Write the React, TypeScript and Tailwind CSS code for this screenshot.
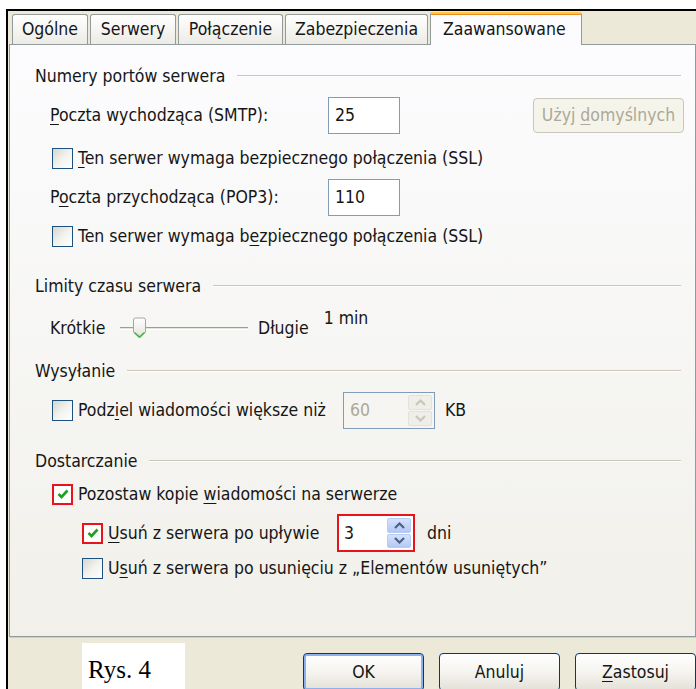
import type { ReactNode } from "react";

// Konto pocztowe — karta "Zaawansowane" (Windows XP)

const ui = "font-['DejaVu_Sans_Condensed','Liberation_Sans',sans-serif] text-[17.5px] text-[#161616]";

const tabs = ["Ogólne", "Serwery", "Połączenie", "Zabezpieczenia"];
const tabWidths = ["w-[76px]", "w-[86px]", "w-[105px]", "w-[143px]"];

function U({ children }: { children: ReactNode }) {
  return <span className="underline decoration-1 underline-offset-[3px]">{children}</span>;
}

function Check({ checked = false, marked = false }: { checked?: boolean; marked?: boolean }) {
  return (
    <span
      className={`flex h-[21px] w-[21px] shrink-0 items-center justify-center ${
        marked ? "border-2 border-[#e8141c] bg-white" : "border border-[#1c5180] bg-gradient-to-br from-[#d6d6cf] via-[#f2f2ee] to-white"
      }`}
    >
      {checked && (
        <svg width="14" height="14" viewBox="0 0 14 14">
          <path d="M2.5 7 L5.5 10 L11.5 3.5" fill="none" stroke="#21a121" strokeWidth="2.6" />
        </svg>
      )}
    </span>
  );
}

function Group({ title }: { title: string }) {
  return (
    <div className="flex h-[20px] items-center pl-[25px] pr-[14px]">
      <span>{title}</span>
      <span className="ml-[12px] h-[2px] flex-1 border-t border-[#c9c7ba] border-b border-b-white" />
    </div>
  );
}

function Arrow({ up, color }: { up: boolean; color: string }) {
  return (
    <svg width="11" height="7" viewBox="0 0 11 7">
      <path d={up ? "M1 6 L5.5 1.5 L10 6" : "M1 1 L5.5 5.5 L10 1"} fill="none" stroke={color} strokeWidth="2.2" />
    </svg>
  );
}

function Spin({ enabled }: { enabled: boolean }) {
  const cell = enabled
    ? "bg-gradient-to-b from-[#d5e2fc] to-[#b4c8f5] border border-[#b7cbf4]"
    : "bg-[#efeee8] border border-[#e2e1da]";
  const c = enabled ? "#4d6185" : "#c9c7ba";
  return (
    <div className="flex h-full w-[26px] flex-col gap-px py-[2px] pr-[2px]">
      <span className={`flex flex-1 items-center justify-center rounded-[2px] ${cell}`}>
        <Arrow up color={c} />
      </span>
      <span className={`flex flex-1 items-center justify-center rounded-[2px] ${cell}`}>
        <Arrow up={false} color={c} />
      </span>
    </div>
  );
}

function Thumb() {
  return (
    <svg width="15" height="22" viewBox="0 0 15 22" className="absolute left-[12px] top-[4px]">
      <defs>
        <linearGradient id="th" x1="0" y1="0" x2="0" y2="1">
          <stop offset="0" stopColor="#ffffff" />
          <stop offset="1" stopColor="#e3e2dc" />
        </linearGradient>
      </defs>
      <path d="M1.5 3 Q1.5 1 3.5 1 H11.5 Q13.5 1 13.5 3 V15 L7.5 21 L1.5 15 Z" fill="url(#th)" stroke="#a6a59c" />
      <path d="M2.5 15.5 L7.5 20 L12.5 15.5" fill="none" stroke="#3bb53b" strokeWidth="1.4" />
    </svg>
  );
}

function XpButton({ children, focused = false }: { children: ReactNode; focused?: boolean }) {
  return (
    <div
      className={`flex h-[38px] w-[121px] shrink-0 items-center justify-center rounded-[4px] border border-[#003c74] bg-gradient-to-b from-white via-[#f5f4ef] to-[#e3e1d7] ${
        focused ? "shadow-[inset_0_0_0_2px_#8fb0ef]" : ""
      }`}
    >
      {children}
    </div>
  );
}

export default function App() {
  return (
    <div className={`h-[689px] w-[696px] overflow-hidden bg-white pl-[6px] pt-[9px] ${ui}`}>
      <div className="h-[700px] border-l-2 border-t-2 border-black bg-[#ece9d8]">
        {/* zakładki */}
        <div className="relative z-10 flex h-[33px] items-end gap-[2px] pl-[4px]">
          {tabs.map((t, i) => (
            <div
              key={t}
              className={`flex h-[30px] items-center justify-center rounded-t-[3px] border border-b-0 border-[#919b9c] bg-gradient-to-b from-white to-[#ecebe5] ${tabWidths[i]}`}
            >
              {t}
            </div>
          ))}
          <div className="relative top-px flex h-[33px] w-[152px] flex-col rounded-t-[3px] border-x border-[#919b9c] bg-[#fcfcfe]">
            <span className="h-[3px] rounded-t-[2px] bg-[#ffc83c] border-b border-[#e68b2c]" />
            <span className="pl-[12px] pt-[1px]">Zaawansowane</span>
          </div>
        </div>

        {/* panel */}
        <div className="ml-px flex h-[593px] w-[687px] flex-col border border-[#919b9c] bg-gradient-to-b from-[#fcfcfe] to-[#f1f0ea] shadow-[1px_1px_0_#d0cfc4]">
          <div className="mt-[21px]">
            <Group title="Numery portów serwera" />
          </div>

          <div className="mt-[10px] flex h-[38px] items-center pl-[40px]">
            <span className="w-[278px]">
              <U>P</U>oczta wychodząca (SMTP):
            </span>
            <span className="flex h-[37px] w-[72px] items-center border border-[#7f9db9] bg-white pl-[6px]">25</span>
            <span className="ml-[133px] flex h-[35px] w-[151px] items-center justify-center rounded-[4px] border border-[#c9c7ba] bg-[#f5f4ea] text-[#aca899]">
              <span>
                Użyj <U>d</U>omyślnych
              </span>
            </span>
          </div>

          <div className="mt-[12px] flex h-[24px] items-center gap-[5px] pl-[42px]">
            <Check />
            <span>
              <U>T</U>en serwer wymaga bezpiecznego połączenia (SSL)
            </span>
          </div>

          <div className="mt-[8px] flex h-[38px] items-center pl-[40px]">
            <span className="w-[278px]">
              P<U>o</U>czta przychodząca (POP3):
            </span>
            <span className="flex h-[37px] w-[72px] items-center border border-[#7f9db9] bg-white pl-[6px]">110</span>
          </div>

          <div className="mt-[8px] flex h-[24px] items-center gap-[5px] pl-[42px]">
            <Check />
            <span>
              Ten serwer wymaga b<U>e</U>zpiecznego połączenia (SSL)
            </span>
          </div>

          <div className="mt-[28px]">
            <Group title="Limity czasu serwera" />
          </div>

          <div className="mt-[17px] flex h-[30px] items-center pl-[40px]">
            <span className="w-[70px]">Krótkie</span>
            <div className="relative h-[30px] w-[128px]">
              <span className="absolute left-0 right-0 top-[14px] h-[3px] border-t border-[#9d9c99] border-b border-b-white bg-[#e4e3dc]" />
              <Thumb />
            </div>
            <span className="ml-[10px]">Długie</span>
            <span className="ml-[15px] self-start -mt-[8px]">1 min</span>
          </div>

          <div className="mt-[18px]">
            <Group title="Wysyłanie" />
          </div>

          <div className="mt-[10px] flex h-[38px] items-center pl-[42px]">
            <Check />
            <span className="ml-[5px] w-[265px]">
              Podz<U>i</U>el wiadomości większe niż
            </span>
            <span className="flex h-[37px] w-[92px] items-center justify-between border border-[#7f9db9] bg-[#f6f5f1] pl-[6px] text-[#aca899]">
              60
              <Spin enabled={false} />
            </span>
            <span className="ml-[10px]">KB</span>
          </div>

          <div className="mt-[22px]">
            <Group title="Dostarczanie" />
          </div>

          <div className="mt-[11px] flex h-[24px] items-center gap-[5px] pl-[42px]">
            <Check checked marked />
            <span>
              Pozostaw kopie <U>w</U>iadomości na serwerze
            </span>
          </div>

          <div className="mt-[8px] flex h-[38px] items-center pl-[72px]">
            <Check checked marked />
            <span className="ml-[5px] w-[229px]">
              <U>U</U>suń z serwera po upływie
            </span>
            <span className="flex h-[38px] w-[78px] items-center justify-between border-2 border-[#e8141c] bg-white pl-[5px]">
              3
              <Spin enabled />
            </span>
            <span className="ml-[12px]">dni</span>
          </div>

          <div className="mt-[4px] flex h-[24px] items-center gap-[5px] pl-[72px]">
            <Check />
            <span>
              U<U>s</U>uń z serwera po usunięciu z „Elementów usuniętych”
            </span>
          </div>
        </div>

        {/* przyciski */}
        <div className="flex items-start">
          <div className="ml-[74px] mt-[6px] h-[50px] w-[106px] bg-white pl-[6px] pt-[14px] font-['Liberation_Serif',serif] text-[25px] leading-none text-black">
            Rys. 4
          </div>
          <div className="ml-[118px] mt-[16px] flex gap-[15px]">
            <XpButton focused>OK</XpButton>
            <XpButton>Anuluj</XpButton>
            <XpButton>
              <span>
                <U>Z</U>astosuj
              </span>
            </XpButton>
          </div>
        </div>
      </div>
    </div>
  );
}
